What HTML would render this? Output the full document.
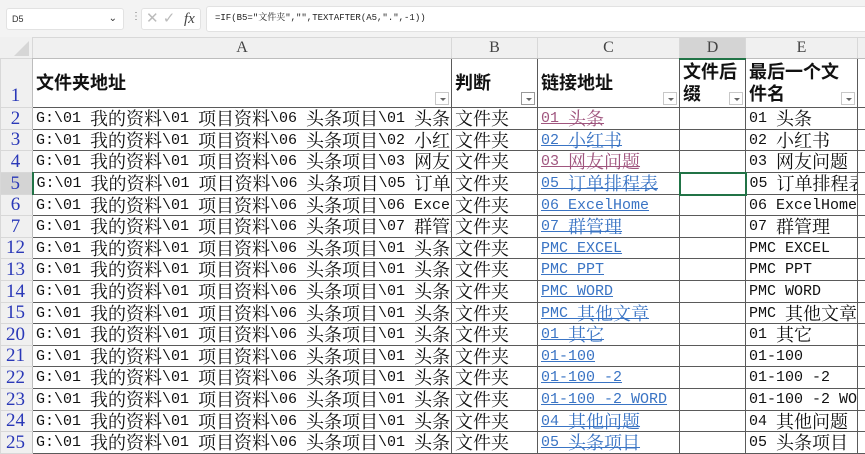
<!DOCTYPE html>
<html><head><meta charset="utf-8"><style>
*{margin:0;padding:0;box-sizing:border-box}
body{width:865px;height:437px;overflow:hidden;background:#fff;position:relative;font-family:"Liberation Mono","Noto Serif CJK SC",serif}
#fb{position:absolute;left:0;top:0;width:865px;height:37px;background:#f3f3f3}
.box{position:absolute;background:#fff;border:1px solid #e2e2e2;border-radius:3px}
table{position:absolute;left:0;top:37px;border-collapse:collapse;table-layout:fixed;width:877px}
td{border:1px solid #5a5a5a;overflow:hidden;white-space:nowrap;font-size:15px;line-height:18px;padding:0 0 0 3px;color:#111;vertical-align:bottom}
tr.r td{height:22px}
tr.s td{height:21px}
tr.r td>div{height:21px;overflow:hidden;line-height:22px}
tr.s td>div{height:20px;overflow:hidden;line-height:21px}
k{font-size:18px;font-family:"Noto Serif CJK SC",serif;line-height:0;vertical-align:baseline;position:relative;top:3px}
tr.ch td{background:#f0f0f0;border:1px solid #d8d8d8;border-bottom:1px solid #bdbdbd;text-align:center;font-family:"Liberation Serif",serif;font-size:16px;color:#444;vertical-align:middle;padding:0}
td.rh{background:#f0f0f0;border-color:#d8d8d8;border-right:1px solid #bdbdbd;color:#2a38b8;font-family:"Liberation Serif",serif;font-size:19px;text-align:center;padding:0 2px 0 0;vertical-align:bottom;line-height:20px}
tr.h td{font-family:"Liberation Sans","Noto Sans CJK SC",sans-serif;font-weight:bold;font-size:18px;line-height:22px;position:relative;vertical-align:middle}
tr.h td.rh{font-family:"Liberation Serif",serif;font-weight:normal;font-size:19px;vertical-align:bottom}
.dd{position:absolute;right:2px;bottom:2px;width:14px;height:13px;border:1px solid #c8c8c8;background:#fff}
.dd:after{content:"";position:absolute;left:4px;top:5px;border-left:3px solid transparent;border-right:3px solid transparent;border-top:3px solid #666}
a{text-decoration:underline}
.v{color:#a0567f}.b{color:#3a74c4}
</style></head><body>
<div id="fb">
 <div class="box" style="left:6px;top:8px;width:118px;height:22px;font-size:9px;line-height:20px;padding-left:5px;color:#333;font-family:'Liberation Sans',sans-serif">D5<span style="position:absolute;right:6px;top:0;font-size:10px">&#8964;</span></div>
 <div style="position:absolute;left:131px;top:11px;color:#777;font-size:10px">&#8942;</div>
 <div class="box" style="left:141px;top:8px;width:60px;height:22px;color:#bbb;font-family:'Liberation Sans',sans-serif;font-size:15px;line-height:20px;padding-left:4px">&#x2715; &#x2713;<span style="position:absolute;left:42px;top:0;color:#444;font-family:'Liberation Serif',serif;font-style:italic;font-size:15px">fx</span></div>
 <div class="box" style="left:206px;top:6px;width:670px;height:26px;font-size:9px;line-height:22px;padding-left:8px;color:#222">=IF(B5="文件夹","",TEXTAFTER(A5,".",-1))</div>
</div>
<div style="position:absolute;left:0;top:37px;width:32px;height:21px;background:#f0f0f0"></div>
<svg style="position:absolute;left:12px;top:40px" width="18" height="17"><polygon points="17,1 17,16 2,16" fill="#d6d6d6"/></svg>
<table>
<colgroup><col style="width:32px"><col style="width:419px"><col style="width:86px"><col style="width:142px"><col style="width:66px"><col style="width:112px"><col style="width:20px"></colgroup>
<tr class="ch" style="height:21px"><td style="background:transparent;border:none"></td><td>A</td><td>B</td><td>C</td><td style="background:#d4d4d4;border-bottom:2px solid #217346">D</td><td>E</td><td></td></tr>
<tr class="h" style="height:49px"><td class="rh">1</td><td>文件夹地址<span class="dd"></span></td><td>判断<span class="dd" style="border-color:#999"></span></td><td>链接地址<span class="dd"></span></td><td>文件后<br>缀<span class="dd"></span></td><td>最后一个文<br>件名<span class="dd"></span></td><td></td></tr>
<tr class="r"><td class="rh">2</td><td><div>G:\01 <k>我的资料</k>\01 <k>项目资料</k>\06 <k>头条项目</k>\01 <k>头条</k></div></td><td><div><k>文件夹</k></div></td><td><div><a class="v">01 <k>头条</k></a></div></td><td></td><td><div>01 <k>头条</k></div></td><td></td></tr>
<tr class="s"><td class="rh">3</td><td><div>G:\01 <k>我的资料</k>\01 <k>项目资料</k>\06 <k>头条项目</k>\02 <k>小红书</k></div></td><td><div><k>文件夹</k></div></td><td><div><a class="b">02 <k>小红书</k></a></div></td><td></td><td><div>02 <k>小红书</k></div></td><td></td></tr>
<tr class="r"><td class="rh">4</td><td><div>G:\01 <k>我的资料</k>\01 <k>项目资料</k>\06 <k>头条项目</k>\03 <k>网友问题</k></div></td><td><div><k>文件夹</k></div></td><td><div><a class="v">03 <k>网友问题</k></a></div></td><td></td><td><div>03 <k>网友问题</k></div></td><td></td></tr>
<tr class="r"><td class="rh" style="background:#d4d4d4;border-right:2px solid #217346">5</td><td><div>G:\01 <k>我的资料</k>\01 <k>项目资料</k>\06 <k>头条项目</k>\05 <k>订单排程表</k></div></td><td><div><k>文件夹</k></div></td><td><div><a class="b">05 <k>订单排程表</k></a></div></td><td style="border:2px solid #217346"></td><td><div>05 <k>订单排程表</k></div></td><td></td></tr>
<tr class="s"><td class="rh">6</td><td><div>G:\01 <k>我的资料</k>\01 <k>项目资料</k>\06 <k>头条项目</k>\06 ExcelHome</div></td><td><div><k>文件夹</k></div></td><td><div><a class="b">06 ExcelHome</a></div></td><td></td><td><div>06 ExcelHome</div></td><td></td></tr>
<tr class="r"><td class="rh">7</td><td><div>G:\01 <k>我的资料</k>\01 <k>项目资料</k>\06 <k>头条项目</k>\07 <k>群管理</k></div></td><td><div><k>文件夹</k></div></td><td><div><a class="b">07 <k>群管理</k></a></div></td><td></td><td><div>07 <k>群管理</k></div></td><td></td></tr>
<tr class="s"><td class="rh">12</td><td><div>G:\01 <k>我的资料</k>\01 <k>项目资料</k>\06 <k>头条项目</k>\01 <k>头条</k>\PMC</div></td><td><div><k>文件夹</k></div></td><td><div><a class="b">PMC EXCEL</a></div></td><td></td><td><div>PMC EXCEL</div></td><td></td></tr>
<tr class="r"><td class="rh">13</td><td><div>G:\01 <k>我的资料</k>\01 <k>项目资料</k>\06 <k>头条项目</k>\01 <k>头条</k>\PMC</div></td><td><div><k>文件夹</k></div></td><td><div><a class="b">PMC PPT</a></div></td><td></td><td><div>PMC PPT</div></td><td></td></tr>
<tr class="r"><td class="rh">14</td><td><div>G:\01 <k>我的资料</k>\01 <k>项目资料</k>\06 <k>头条项目</k>\01 <k>头条</k>\PMC</div></td><td><div><k>文件夹</k></div></td><td><div><a class="b">PMC WORD</a></div></td><td></td><td><div>PMC WORD</div></td><td></td></tr>
<tr class="s"><td class="rh">15</td><td><div>G:\01 <k>我的资料</k>\01 <k>项目资料</k>\06 <k>头条项目</k>\01 <k>头条</k>\PMC</div></td><td><div><k>文件夹</k></div></td><td><div><a class="b">PMC <k>其他文章</k></a></div></td><td></td><td><div>PMC <k>其他文章</k></div></td><td></td></tr>
<tr class="r"><td class="rh">20</td><td><div>G:\01 <k>我的资料</k>\01 <k>项目资料</k>\06 <k>头条项目</k>\01 <k>头条</k>\01</div></td><td><div><k>文件夹</k></div></td><td><div><a class="b">01 <k>其它</k></a></div></td><td></td><td><div>01 <k>其它</k></div></td><td></td></tr>
<tr class="s"><td class="rh">21</td><td><div>G:\01 <k>我的资料</k>\01 <k>项目资料</k>\06 <k>头条项目</k>\01 <k>头条</k>\01</div></td><td><div><k>文件夹</k></div></td><td><div><a class="b">01-100</a></div></td><td></td><td><div>01-100</div></td><td></td></tr>
<tr class="r"><td class="rh">22</td><td><div>G:\01 <k>我的资料</k>\01 <k>项目资料</k>\06 <k>头条项目</k>\01 <k>头条</k>\01</div></td><td><div><k>文件夹</k></div></td><td><div><a class="b">01-100 -2</a></div></td><td></td><td><div>01-100 -2</div></td><td></td></tr>
<tr class="r"><td class="rh">23</td><td><div>G:\01 <k>我的资料</k>\01 <k>项目资料</k>\06 <k>头条项目</k>\01 <k>头条</k>\01</div></td><td><div><k>文件夹</k></div></td><td><div><a class="b">01-100 -2 WORD</a></div></td><td></td><td><div>01-100 -2 WORD</div></td><td></td></tr>
<tr class="s"><td class="rh">24</td><td><div>G:\01 <k>我的资料</k>\01 <k>项目资料</k>\06 <k>头条项目</k>\01 <k>头条</k>\04</div></td><td><div><k>文件夹</k></div></td><td><div><a class="b">04 <k>其他问题</k></a></div></td><td></td><td><div>04 <k>其他问题</k></div></td><td></td></tr>
<tr class="r"><td class="rh">25</td><td><div>G:\01 <k>我的资料</k>\01 <k>项目资料</k>\06 <k>头条项目</k>\01 <k>头条</k>\05</div></td><td><div><k>文件夹</k></div></td><td><div><a class="b">05 <k>头条项目</k></a></div></td><td></td><td><div>05 <k>头条项目</k></div></td><td></td></tr>
</table>
</body></html>
